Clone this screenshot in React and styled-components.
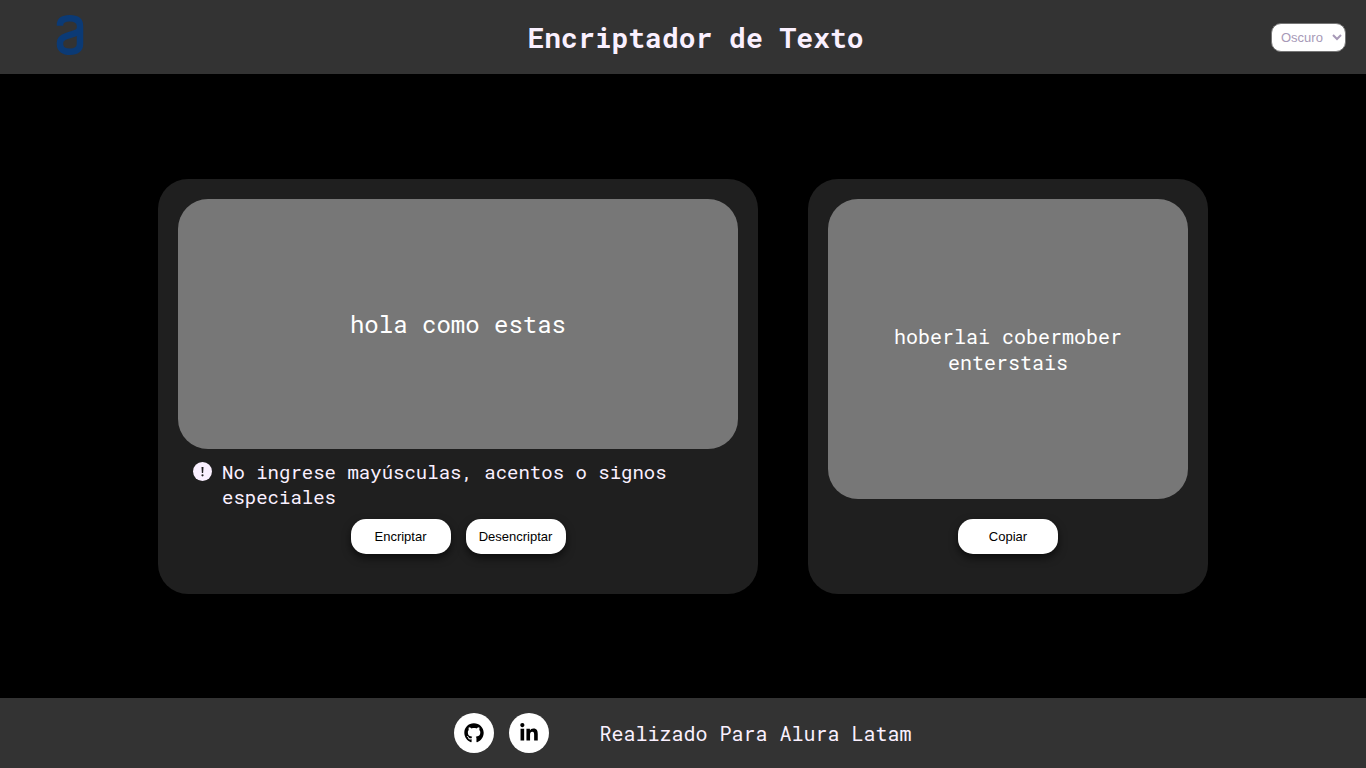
import React, { useState } from "react";
import styled, { createGlobalStyle } from "styled-components";
import { FaGithub, FaLinkedinIn } from "react-icons/fa6";

const GlobalStyle = createGlobalStyle`
  * {
    box-sizing: border-box;
    margin: 0;
    padding: 0;
  }
  body {
    background: #000;
    color: #faf0ff;
    font-family: "Roboto Mono", "Liberation Mono", monospace;
  }
`;

const Page = styled.div`
  display: flex;
  flex-direction: column;
  min-height: 100vh;
`;

const Header = styled.header`
  display: flex;
  align-items: center;
  justify-content: space-between;
  min-height: 74px;
  padding: 0 20px;
  background: #333;
`;

const Logo = styled.a`
  display: flex;
  justify-content: center;
  width: 100px;
  padding-bottom: 4px;
`;

const Title = styled.h1`
  font-size: 28px;
  line-height: 38px;
  font-weight: 700;
  padding-top: 2px;
`;

const ThemeSelect = styled.select`
  width: 75px;
  height: 29px;
  padding: 0 5px;
  border: 1px solid #767676;
  border-radius: 10px;
  background: #fff;
  color: #a799b7;
  font-family: "Liberation Sans", Arial, sans-serif;
  font-size: 13px;
`;

const Main = styled.main`
  display: flex;
  flex: 1;
  flex-wrap: wrap;
  align-items: center;
  align-content: center;
  justify-content: center;
  gap: 50px;
  padding: 20px;
`;

const Card = styled.section`
  display: flex;
  flex-direction: column;
  width: 100%;
  max-width: ${(p) => (p.$wide ? "600px" : "400px")};
  padding: 20px 20px 40px;
  border-radius: 30px;
  background: #1f1f1f;
`;

const Input = styled.textarea`
  width: 100%;
  height: 250px;
  padding: 109px 20px;
  border: none;
  border-radius: 30px;
  outline: none;
  resize: none;
  background: #777;
  color: #fff;
  font-family: inherit;
  font-size: 24px;
  line-height: 32px;
  text-align: center;
`;

const Result = styled.output`
  display: flex;
  align-items: center;
  justify-content: center;
  height: 300px;
  margin-bottom: 20px;
  padding: 20px;
  border-radius: 30px;
  background: #777;
  color: #fff;
  font-size: 20px;
  line-height: 26px;
  text-align: center;
`;

const Hint = styled.p`
  display: flex;
  gap: 10px;
  padding: 10px 15px;
  font-size: 19px;
  line-height: 25px;

  svg {
    flex: none;
    margin-top: 3px;
  }
`;

const Actions = styled.div`
  display: flex;
  justify-content: center;
  gap: 15px;
`;

const Button = styled.button`
  width: 100px;
  height: 35px;
  border: none;
  border-radius: 15px;
  background: #fff;
  color: #000;
  box-shadow: 0 4px 8px rgba(0, 0, 0, 0.6);
  font-family: "Liberation Sans", Arial, sans-serif;
  font-size: 13px;
  cursor: pointer;
`;

const Footer = styled.footer`
  display: flex;
  align-items: center;
  justify-content: center;
  gap: 50px;
  min-height: 70px;
  background: #333;
  font-size: 20px;
  line-height: 26px;
`;

const Social = styled.nav`
  display: flex;
  gap: 15px;
`;

const SocialLink = styled.a`
  display: flex;
  align-items: center;
  justify-content: center;
  width: 40px;
  height: 40px;
  border-radius: 50%;
  background: #fff;
  color: #000;
`;

const KEYS = { e: "enter", i: "imes", a: "ai", o: "ober", u: "ufat" };

const encrypt = (text) => text.replace(/[eioua]/g, (c) => KEYS[c]);
const decrypt = (text) =>
  Object.entries(KEYS).reduce((t, [k, v]) => t.replaceAll(v, k), text);

export default function App() {
  const [text, setText] = useState("hola como estas");
  const [result, setResult] = useState("hoberlai cobermober enterstais");

  return (
    <Page>
      <GlobalStyle />
      <Header>
        <Logo href="#" aria-label="Alura">
          <svg width="28" height="42" viewBox="0 0 28 42" fill="none" stroke="#0b3a75" strokeWidth="6.5">
            <path d="M4 11.700V11C4 6.500 7.500 4.200 13.700 4.200C20.500 4.200 24 6.700 24 12V30C24 35 20.500 37.700 14 37.700C7.500 37.700 4 35 4 30.500V29C4 25 6.500 23.200 11 21.800L18 19.600C22 18.300 24 17 24 13" />
          </svg>
        </Logo>
        <Title>Encriptador de Texto</Title>
        <ThemeSelect aria-label="Tema" defaultValue="Oscuro">
          <option>Oscuro</option>
          <option>Claro</option>
        </ThemeSelect>
      </Header>
      <Main>
        <Card $wide>
          <Input
            aria-label="Texto"
            spellCheck={false}
            value={text}
            onChange={(e) => setText(e.target.value)}
          />
          <Hint>
            <svg width="19" height="19" viewBox="0 0 19 19" aria-hidden="true">
              <circle cx="9.500" cy="9.500" r="9.500" fill="currentColor" />
              <path d="M8.500 5h2l-.4 6h-1.200z" fill="#1f1f1f" />
              <circle cx="9.500" cy="13.300" r="1.100" fill="#1f1f1f" />
            </svg>
            No ingrese mayúsculas, acentos o signos especiales
          </Hint>
          <Actions>
            <Button onClick={() => setResult(encrypt(text))}>Encriptar</Button>
            <Button onClick={() => setResult(decrypt(text))}>Desencriptar</Button>
          </Actions>
        </Card>
        <Card>
          <Result>{result}</Result>
          <Actions>
            <Button onClick={() => navigator.clipboard?.writeText(result)}>Copiar</Button>
          </Actions>
        </Card>
      </Main>
      <Footer>
        <Social>
          <SocialLink href="#" aria-label="GitHub">
            <FaGithub size={20} />
          </SocialLink>
          <SocialLink href="#" aria-label="LinkedIn">
            <FaLinkedinIn size={20} />
          </SocialLink>
        </Social>
        <p>Realizado Para Alura Latam</p>
      </Footer>
    </Page>
  );
}
